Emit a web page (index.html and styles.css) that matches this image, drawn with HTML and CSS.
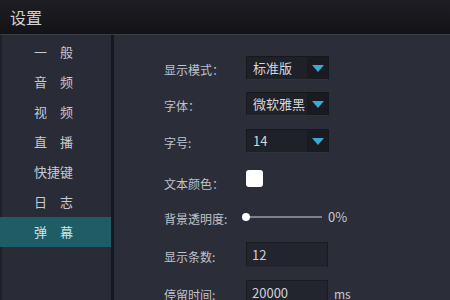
FILE: index.html
```html
<!DOCTYPE html>
<html lang="zh-CN">
<head>
    <meta charset="UTF-8">
    <title>设置</title>
    <link rel="stylesheet" href="styles.css">
</head>
<body>
    <div class="titlebar">设置</div>
    <div class="main">
        <ul class="sidebar">
            <li>一　般</li>
            <li>音　频</li>
            <li>视　频</li>
            <li>直　播</li>
            <li>快捷键</li>
            <li>日　志</li>
            <li class="active">弹　幕</li>
        </ul>
        <div class="content">
            <div class="label">显示模式：</div>
            <div class="select"><span>标准版</span><i class="arrow"></i></div>

            <div class="label">字体：</div>
            <div class="select"><span>微软雅黑</span><i class="arrow"></i></div>

            <div class="label">字号:</div>
            <div class="select"><span>14</span><i class="arrow"></i></div>

            <div class="label low">文本颜色：</div>
            <div><div class="swatch"></div></div>

            <div class="label">背景透明度:</div>
            <div class="slider-row">
                <div class="slider"><span class="knob"></span></div>
                <span class="value">0%</span>
            </div>

            <div class="label">显示条数:</div>
            <div class="field-row"><div class="field">12</div></div>

            <div class="label">停留时间:</div>
            <div class="field-row"><div class="field">20000</div><span class="unit">ms</span></div>
        </div>
    </div>
</body>
</html>
```

FILE: styles.css
```css
body {
    margin: 0;
    width: 450px;
    height: 300px;
    overflow: hidden;
    background-color: #2a2c37;
    font-family: "Noto Sans CJK SC", "Liberation Sans", sans-serif;
    color: #c4c7cf;
}

.titlebar {
    height: 34px;
    line-height: 34px;
    padding-left: 10px;
    font-size: 16px;
    color: #d2d2d6;
    background: linear-gradient(#1d1d23, #131317);
    border-bottom: 1px solid #3b3d48;
}

.main {
    display: flex;
    height: 265px;
}

.sidebar {
    list-style: none;
    margin: 0;
    padding: 2px 0 0;
    width: 111px;
    background-color: #292b36;
    border-right: 3px solid #17181e;
    box-shadow: inset 2px 0 0 #1f2029;
}

.sidebar li {
    height: 30px;
    line-height: 30px;
    padding-left: 34px;
    font-size: 13px;
    color: #c6c9d2;
}

.sidebar li.active {
    background-color: #1e5d66;
    color: #cfe3e6;
}

.content {
    flex: 1;
    display: grid;
    grid-template-columns: 82px 1fr;
    grid-template-rows: 36px 36px 38px 37px 39px 38px 38px;
    align-items: center;
    padding: 15px 0 0 50px;
    background-color: #2b2d39;
}

.label {
    font-size: 12px;
    color: #bfc2ca;
    padding-top: 3px;
}

.label.low {
    padding-top: 9px;
}

.select {
    display: flex;
    width: 81px;
    height: 22px;
    background-color: #1f2129;
    border: 1px solid #17181d;
    border-bottom-color: #30323c;
}

.select span {
    flex: 1;
    line-height: 22px;
    padding-left: 6px;
    font-size: 13px;
    color: #d4d6dc;
    white-space: nowrap;
    overflow: hidden;
}

.select .arrow {
    position: relative;
    width: 21px;
    background-color: #191b21;
}

.select .arrow::after {
    content: "";
    position: absolute;
    left: 5px;
    top: 8px;
    border-left: 6px solid transparent;
    border-right: 6px solid transparent;
    border-top: 7px solid #3aa9d6;
}

.swatch {
    width: 17px;
    height: 17px;
    background-color: #fff;
    border-radius: 3px;
}

.slider-row {
    display: flex;
    align-items: center;
    margin-left: -4px;
}

.slider {
    position: relative;
    width: 76px;
    height: 2px;
    margin-left: 4px;
    background-color: #7f818a;
}

.slider .knob {
    position: absolute;
    left: -4px;
    top: -3px;
    width: 8px;
    height: 8px;
    border-radius: 50%;
    background-color: #fff;
}

.value {
    margin-left: 6px;
    font-size: 13px;
    color: #c8cad0;
}

.field-row {
    display: flex;
    align-items: center;
}

.field {
    width: 75px;
    height: 24px;
    line-height: 24px;
    padding-left: 5px;
    font-size: 13px;
    color: #d0d2d8;
    background-color: #22242e;
    border: 1px solid #1a1b21;
    border-bottom-color: #2f313b;
}

.unit {
    margin-left: 6px;
    font-size: 12px;
    color: #c8cad0;
}
```
